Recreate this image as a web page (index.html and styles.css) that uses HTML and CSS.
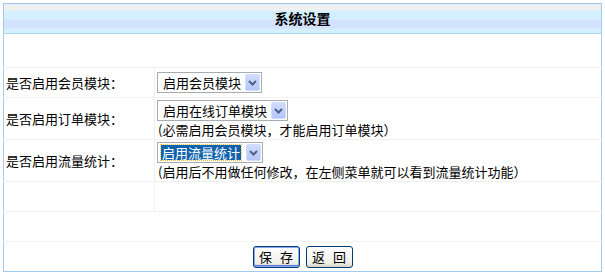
FILE: index.html
```html
<!DOCTYPE html>
<html lang="zh-CN">
<head>
    <meta charset="UTF-8">
    <title>系统设置</title>
    <link rel="stylesheet" href="styles.css">
</head>
<body>
    <table class="panel">
        <tr>
            <th class="panel-title" colspan="2">系统设置</th>
        </tr>
        <tr class="row-blank">
            <td colspan="2"></td>
        </tr>
        <tr class="row-short">
            <td class="label">是否启用会员模块<span class="punct">：</span></td>
            <td class="value">
                <span class="select select-member">
                    <span class="select-text">启用会员模块</span>
                    <span class="select-btn"><svg width="9" height="6" viewBox="0 0 9 6"><path d="M1 1 L4.5 4.5 L8 1" fill="none" stroke="#4d6185" stroke-width="2"/></svg></span>
                </span>
            </td>
        </tr>
        <tr class="row-tall">
            <td class="label">是否启用订单模块<span class="punct">：</span></td>
            <td class="value">
                <span class="select select-order">
                    <span class="select-text">启用在线订单模块</span>
                    <span class="select-btn"><svg width="9" height="6" viewBox="0 0 9 6"><path d="M1 1 L4.5 4.5 L8 1" fill="none" stroke="#4d6185" stroke-width="2"/></svg></span>
                </span>
                <div class="hint">(必需启用会员模块<span class="punct">，</span>才能启用订单模块<span class="punct">）</span></div>
            </td>
        </tr>
        <tr class="row-tall">
            <td class="label">是否启用流量统计<span class="punct">：</span></td>
            <td class="value">
                <span class="select select-stats">
                    <span class="select-text selected">启用流量统计</span>
                    <span class="select-btn"><svg width="9" height="6" viewBox="0 0 9 6"><path d="M1 1 L4.5 4.5 L8 1" fill="none" stroke="#4d6185" stroke-width="2"/></svg></span>
                </span>
                <div class="hint">(启用后不用做任何修改<span class="punct">，</span>在左侧菜单就可以看到流量统计功能<span class="punct">）</span></div>
            </td>
        </tr>
        <tr class="row-short">
            <td class="label"></td>
            <td class="value"></td>
        </tr>
        <tr class="row-short">
            <td colspan="2"></td>
        </tr>
        <tr class="row-buttons">
            <td colspan="2">
                <div class="buttons">
                    <button class="btn btn-default">保 存</button>
                    <button class="btn">返 回</button>
                </div>
            </td>
        </tr>
    </table>
</body>
</html>
```

FILE: styles.css
```css
* {
    box-sizing: border-box;
}

body {
    margin: 3px;
    background: #fff;
    color: #000;
    font-family: "Noto Sans CJK SC", "DejaVu Sans", sans-serif;
    font-size: 13px;
}

.panel {
    width: 100%;
    border-collapse: collapse;
    border: 1px solid #a4c8ee;
}

.panel td {
    padding: 0 2px;
    border-bottom: 1px solid #f0f0f0;
    vertical-align: middle;
}

.panel-title {
    height: 30px;
    padding: 0;
    font-size: 14px;
    font-weight: bold;
    line-height: 29px;
    text-align: center;
    border-bottom: 1px solid #a8d8f0;
    background: linear-gradient(to bottom,
        #f0f0f0 0, #f0f0f0 6px,
        #d4f0ff 6px, #d4f0ff 15px,
        #d4e2ff 15px, #d4e2ff 24px,
        #d4f0ff 24px, #d4f0ff 29px);
}

.row-blank td {
    height: 34px;
}

.row-short td {
    height: 30px;
}

.row-tall td {
    height: 42px;
}

.row-buttons td {
    height: 30px;
    border-bottom: none;
}

.label {
    width: 151px;
    border-right: 1px solid #f0f0f0;
    line-height: 15px;
    white-space: nowrap;
}

.value {
    line-height: 15px;
}

/* full-width punctuation, kept one em wide */
.punct {
    display: inline-block;
    width: 1em;
}

.select {
    display: flex;
    align-items: center;
    height: 21px;
    border: 1px solid #a5acb2;
    background: #fff;
    padding: 0 1px 0 3px;
}

.select-member {
    width: 105px;
}

.select-order {
    width: 131px;
}

.select-stats {
    width: 106px;
}

.select-text {
    flex: 1;
    padding: 0 2px;
    line-height: 15px;
    white-space: nowrap;
}

.select-text.selected {
    flex: none;
    margin-right: auto;
    padding: 0 1px;
    background: #1262ad;
    color: #fff;
    outline: 1px dotted #f0c040;
}

.select-btn {
    display: flex;
    align-items: center;
    justify-content: center;
    width: 15px;
    height: 17px;
    flex: none;
    border: 1px solid #d2dcfc;
    border-radius: 2px;
    background: linear-gradient(to bottom, #d0dcfe, #b4c6f8);
}

.hint {
    margin-top: 2px;
    padding-left: 1px;
    line-height: 14px;
    white-space: nowrap;
}

.buttons {
    display: flex;
    justify-content: center;
    gap: 6px;
}

.btn {
    width: 47px;
    height: 22px;
    padding: 0;
    font-family: inherit;
    font-size: 13px;
    line-height: 18px;
    word-spacing: 5px;
    color: #000;
    border: 1px solid #003c74;
    border-radius: 3px;
    background: linear-gradient(to bottom, #fefefe, #f0f0ea 80%, #d6d0c5);
}

.btn-default {
    box-shadow: inset 0 0 0 1px #8ca8ec, inset 0 -1px 0 1px #5878e0;
}
```
